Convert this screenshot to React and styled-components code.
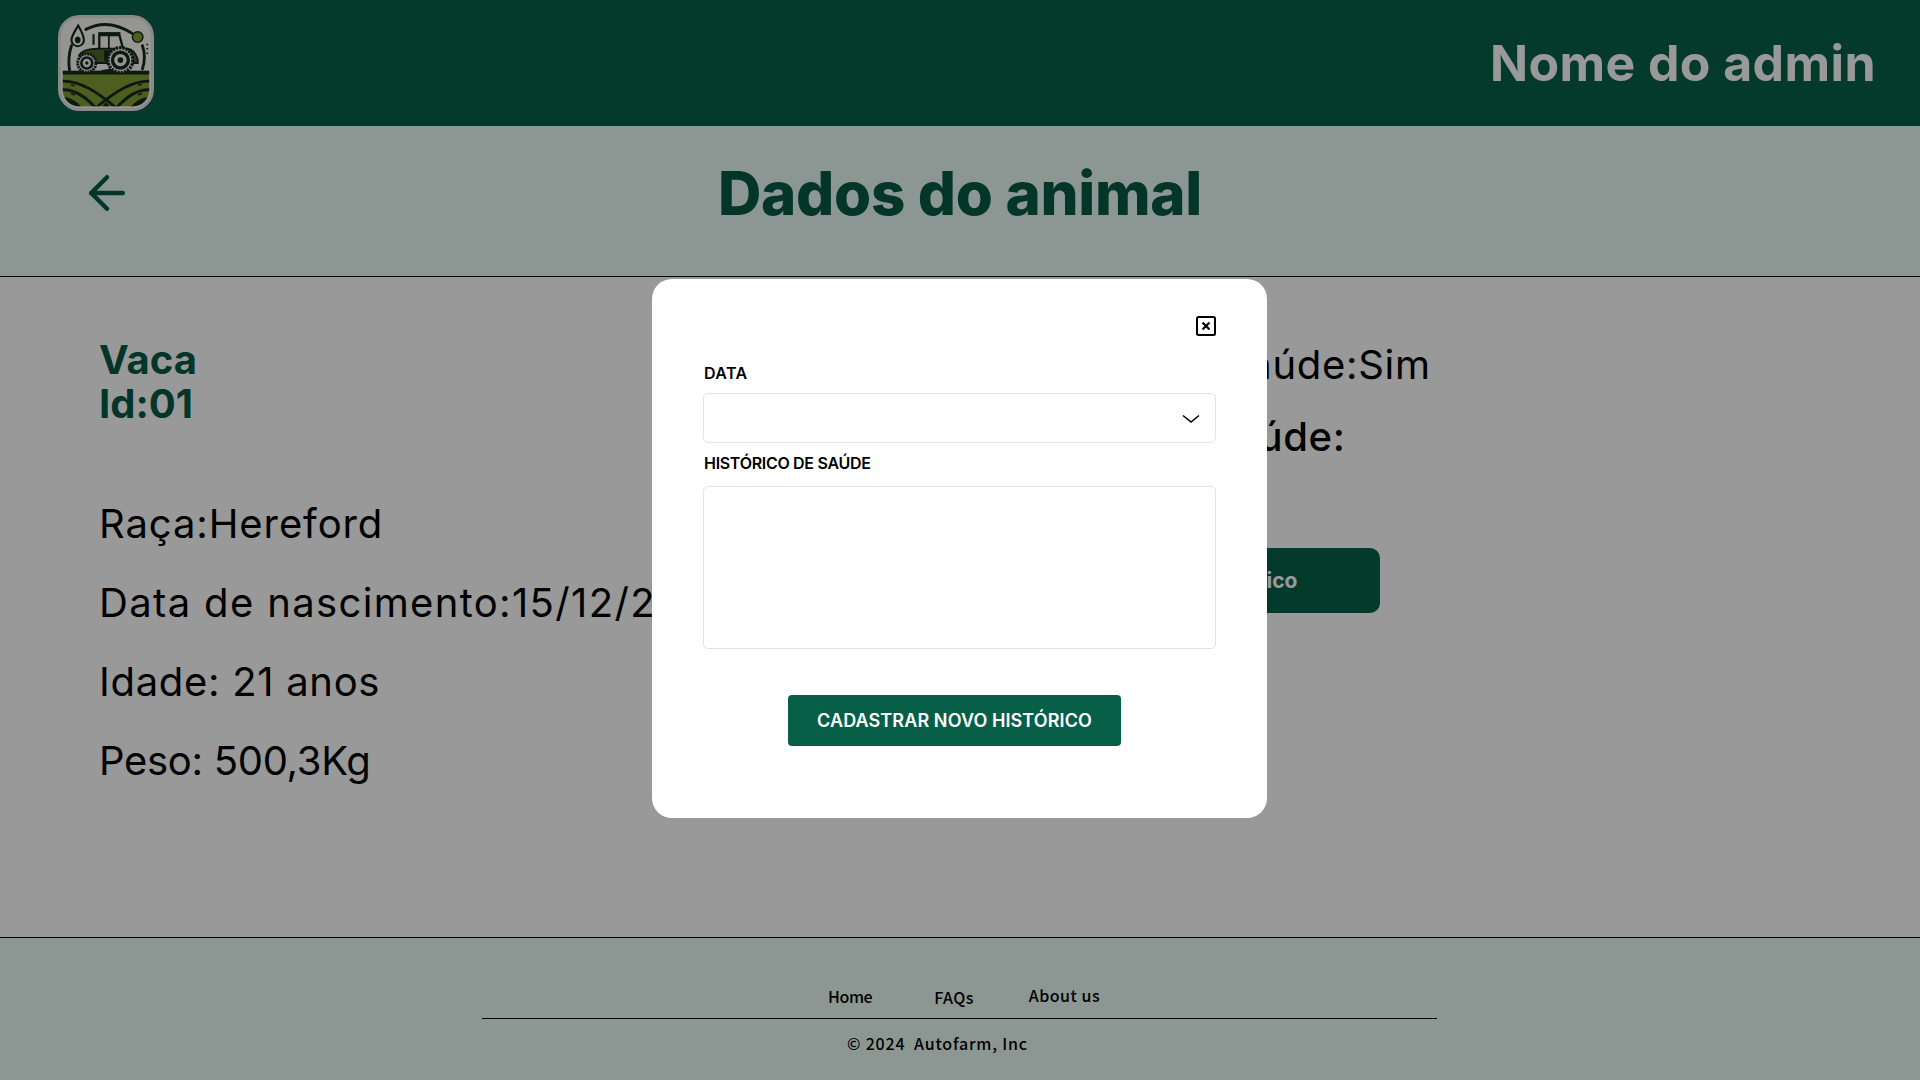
import React from "react";
import styled, { createGlobalStyle } from "styled-components";
import { ArrowLeft } from "lucide-react";

const Global = createGlobalStyle`
  html, body { margin: 0; padding: 0; background: #fff; overflow: hidden; }
  * { box-sizing: border-box; }
`;
const Page = styled.div`
  width: 1920px; height: 1080px; display: flex; flex-direction: column;
  font-family: Inter, "Liberation Sans", sans-serif; color: #000; position: relative; overflow: hidden;
`;
const TopBar = styled.header`
  height: 126px; flex: none; background: #06614a; display: flex; align-items: center;
  justify-content: space-between; padding: 0 44px 0 58px;
`;
const AdminName = styled.div`
  font-size: 50px; font-weight: 700; color: #fff; line-height: 1; letter-spacing: 0.4px;
`;
const TitleBar = styled.div`
  height: 151px; flex: none; background: #e9fcf5; border-bottom: 1px solid #000;
  display: grid; grid-template-columns: 1fr auto 1fr; align-items: center; padding: 0 80px 16px;
  color: #055a45;
`;
const BackIcon = styled(ArrowLeft)`display: block;`;
const Title = styled.h1`
  margin: 0; font-size: 60px; font-weight: 800; line-height: 1.2; color: #055a45; letter-spacing: -0.3px;
`;
const Main = styled.main`
  height: 661px; flex: none; background: #fff; border-bottom: 1px solid #000;
  display: flex; padding: 61px 0 0 99px;
`;
const LeftColumn = styled.section`width: 849px; flex: none;`;
const AnimalId = styled.h2`
  margin: 0 0 58px; font-size: 40px; line-height: 44px; font-weight: 700; color: #055a45;
`;
const InfoRow = styled.p`
  margin: 0; height: 79px; display: flex; align-items: center; font-size: 40px; white-space: nowrap;
  font-weight: 400; letter-spacing: ${p => p.$track}px;
`;
const RightColumn = styled.section`
  flex: none; width: 500px; display: flex; flex-direction: column; align-items: flex-start;
`;
const HealthLine = styled.p`
  margin: ${p => p.$top}px 0 0 ${p => p.$left}px; font-size: 40px; font-weight: ${p => p.$strong ? 500 : 400};
  line-height: 54px; white-space: nowrap; letter-spacing: 0.7px;
`;
const HistoryButton = styled.button`
  margin: 84px 0 0 112px; width: 320px; height: 65px; padding: 0 0 1px 24px; background: #06614a; color: #fff;
  border: 0; border-radius: 10px; font: 700 21px Inter, sans-serif;
`;
const Footer = styled.footer`
  flex: 1; background: #e9fcf5; padding: 45px 0 0 482px;
`;
const FooterInner = styled.div`width: 955px;`;
const FooterNav = styled.nav`
  display: flex; height: 36px; border-bottom: 1px solid #000; padding-left: 346px; align-items: flex-start;
`;
const FooterLink = styled.a`
  font: 500 16px/22px "Noto Sans CJK JP", sans-serif; color: #000; margin-left: ${p => p.$left}px; margin-top: ${p => p.$top}px;
  letter-spacing: ${p => p.$track}px;
`;
const Copyright = styled.div`
  font: 500 16px/22px "Noto Sans CJK JP", sans-serif; margin: 13px 0 0 365px; white-space: pre; letter-spacing: 0.8px;
`;
const Overlay = styled.div`
  position: absolute; inset: 0; background: rgba(0,0,0,.4); display: flex; justify-content: center; align-items: flex-start;
  padding-top: 279px;
`;
const Modal = styled.div`
  width: 615px; height: 539px; margin-right: 1px; background: #fff; border-radius: 20px; padding: 37px 51px 0;
  display: flex; flex-direction: column;
`;
const CloseButton = styled.button`
  align-self: flex-end; width: 20px; height: 20px; padding: 0; background: none; border: 0; display: block;
`;
const Label = styled.label`
  display: block; font-size: 16px; font-weight: 600; line-height: 24px; margin-top: ${p => p.$top}px; padding-left: 1px;
  letter-spacing: ${p => p.$track}px;
`;
const SelectField = styled.div`
  margin-top: ${p => p.$top}px; height: 50px; border: 1px solid #e3e3e3; border-radius: 5px; display: flex; align-items: center;
  justify-content: flex-end; padding-right: 14px;
`;
const TextField = styled.textarea`
  margin-top: 11px; height: 163px; border: 1px solid #e3e3e3; border-radius: 5px; display: block; resize: none; width: 100%;
`;
const SubmitButton = styled.button`
  margin: 46px 10px 0 0; align-self: center; width: 333px; height: 51px; background: #085f47; color: #fff; border: 0; border-radius: 4px;
  font: 600 18px Inter, sans-serif; white-space: nowrap; padding: 0; letter-spacing: 0.1px;
`;

const DARK = "#14291c";
const OLIVE = "#7f9f35";
const PALE = "#f8f8f6";

function Logo() {
  return (
    <svg width="96" height="96" viewBox="0 0 100 100" style={{ display: "block" }}>
      <defs>
        <clipPath id="lgClip"><rect x="5" y="5" width="90" height="90" rx="17" /></clipPath>
      </defs>
      <rect x="1.500" y="1.500" width="97" height="97" rx="21" fill={PALE} stroke="#e4e4e2" strokeWidth="3" />
      <g clipPath="url(#lgClip)">
        <rect x="0" y="60" width="100" height="40" fill={OLIVE} />
        <path d="M3 86Q16 84 28 100H3Z" fill={DARK} />
        <path d="M97 86Q84 84 72 100H97Z" fill={DARK} />
        <g fill="none" stroke={DARK} strokeWidth="3">
          <path d="M3 69Q28 67 64 100" />
          <path d="M97 69Q72 67 36 100" />
          <path d="M3 78Q22 76 42 100" />
          <path d="M97 78Q78 76 58 100" />
          <path d="M44 100L50 93L56 100" />
        </g>
        <path d="M14 73l3 .5M26 74l3 1.500M72 75l3-1.500M84 73l3-.5M14 82l3 1M84 83l3-1" stroke={DARK} strokeWidth="1.600" strokeLinecap="round" />
        <rect x="0" y="58" width="100" height="4" fill={DARK} />
        <path d="M42 59Q50 55 60 57L62 60H40Z" fill={DARK} />
      </g>
      <g fill="none" stroke={DARK} strokeWidth="3" strokeLinecap="round">
        <path d="M12 57Q10 44 14 32" />
        <path d="M29 15Q52 3 77 19" />
        <path d="M88 32Q92 44 88 56" />
      </g>
      <path d="M21 11C25 18 27 22 27 26A6.500 6.500 0 0 1 14 26C14 22 17 18 21 11Z" fill={PALE} stroke={DARK} strokeWidth="2.200" />
      <path d="M20.500 22.500a3 3.500 0 1 0 .1 0Z" fill={DARK} />
      <circle cx="83" cy="23" r="5.500" fill={OLIVE} stroke={DARK} strokeWidth="1.500" />
      <path d="M93 30v1.500M93 34.500v1.500M93 39v1.500" stroke={DARK} strokeWidth="1.800" />
      <g>
        <path d="M37 20v11" stroke={DARK} strokeWidth="2.200" />
        <path d="M43 21H64L68 36H43Z" fill={PALE} stroke={DARK} strokeWidth="2.400" />
        <path d="M42 19H65" stroke={DARK} strokeWidth="2.400" />
        <path d="M53 21V36" stroke={DARK} strokeWidth="1.800" />
        <path d="M22 42Q26 35 42 35H72Q80 36 83 46L83 50H26Z" fill="#4b6a29" stroke={DARK} strokeWidth="2" />
        <path d="M48 37H70V48H48Z" fill={DARK} />
        <circle cx="65" cy="47" r="13" fill={PALE} stroke={DARK} strokeWidth="3.500" strokeDasharray="2.500 1" />
        <circle cx="65" cy="47" r="10" fill={DARK} />
        <circle cx="65" cy="47" r="6.500" fill={PALE} />
        <circle cx="65" cy="47" r="3" fill={DARK} />
        <circle cx="30" cy="50" r="9.500" fill={PALE} stroke={DARK} strokeWidth="3" strokeDasharray="2.200 .8" />
        <circle cx="30" cy="50" r="7" fill={DARK} />
        <circle cx="30" cy="50" r="4.300" fill={PALE} />
        <circle cx="30" cy="50" r="1.800" fill={DARK} />
      </g>
    </svg>
  );
}

function CloseIcon() {
  return (
    <svg width="20" height="20" viewBox="0 0 20 20" style={{ display: "block" }} fill="none" stroke="#000" strokeWidth="2">
      <rect x="1" y="1" width="18" height="18" rx="1.500" />
      <path d="M6.500 6.500l7 7M13.500 6.500l-7 7" strokeWidth="2.200" />
    </svg>
  );
}

function Chevron() {
  return (
    <svg width="20" height="10" viewBox="0 0 20 10" fill="none" stroke="#000" strokeWidth="1.600" style={{ display: "block", transform: "translateY(1px)" }}>
      <path d="M2 1.500l8 6.500 8-6.500" />
    </svg>
  );
}

export default function App() {
  return (
    <Page>
      <Global />
      <TopBar>
        <Logo />
        <AdminName>Nome do admin</AdminName>
      </TopBar>
      <TitleBar>
        <BackIcon size={54} strokeWidth={2} />
        <Title>Dados do animal</Title>
      </TitleBar>
      <Main>
        <LeftColumn>
          <AnimalId>Vaca<br />Id:01</AnimalId>
          <InfoRow $track={0.9}>Raça:Hereford</InfoRow>
          <InfoRow $track={1.35}>Data de nascimento:15/12/2003</InfoRow>
          <InfoRow $track={0.7}>Idade: 21 anos</InfoRow>
          <InfoRow $track={-0.3}>Peso: 500,3Kg</InfoRow>
        </LeftColumn>
        <RightColumn>
          <HealthLine $top={0} $left={0}>Problemas de saúde:Sim</HealthLine>
          <HealthLine $strong $top={18} $left={14}>Histórico de saúde:</HealthLine>
          <HistoryButton>Ver histórico</HistoryButton>
        </RightColumn>
      </Main>
      <Footer>
        <FooterInner>
          <FooterNav>
            <FooterLink $left={0} $top={2} $track={-0.4}>Home</FooterLink>
            <FooterLink $left={62} $top={3} $track={0.4}>FAQs</FooterLink>
            <FooterLink $left={55} $top={1} $track={0.5}>About us</FooterLink>
          </FooterNav>
          <Copyright>© 2024  Autofarm, Inc</Copyright>
        </FooterInner>
      </Footer>
      <Overlay>
        <Modal>
          <CloseButton aria-label="Fechar"><CloseIcon /></CloseButton>
          <Label $top={25} $track={0.4}>DATA</Label>
          <SelectField $top={8}><Chevron /></SelectField>
          <Label $top={8} $track={-0.3}>HISTÓRICO DE SAÚDE</Label>
          <TextField />
          <SubmitButton>CADASTRAR NOVO HISTÓRICO</SubmitButton>
        </Modal>
      </Overlay>
    </Page>
  );
}
